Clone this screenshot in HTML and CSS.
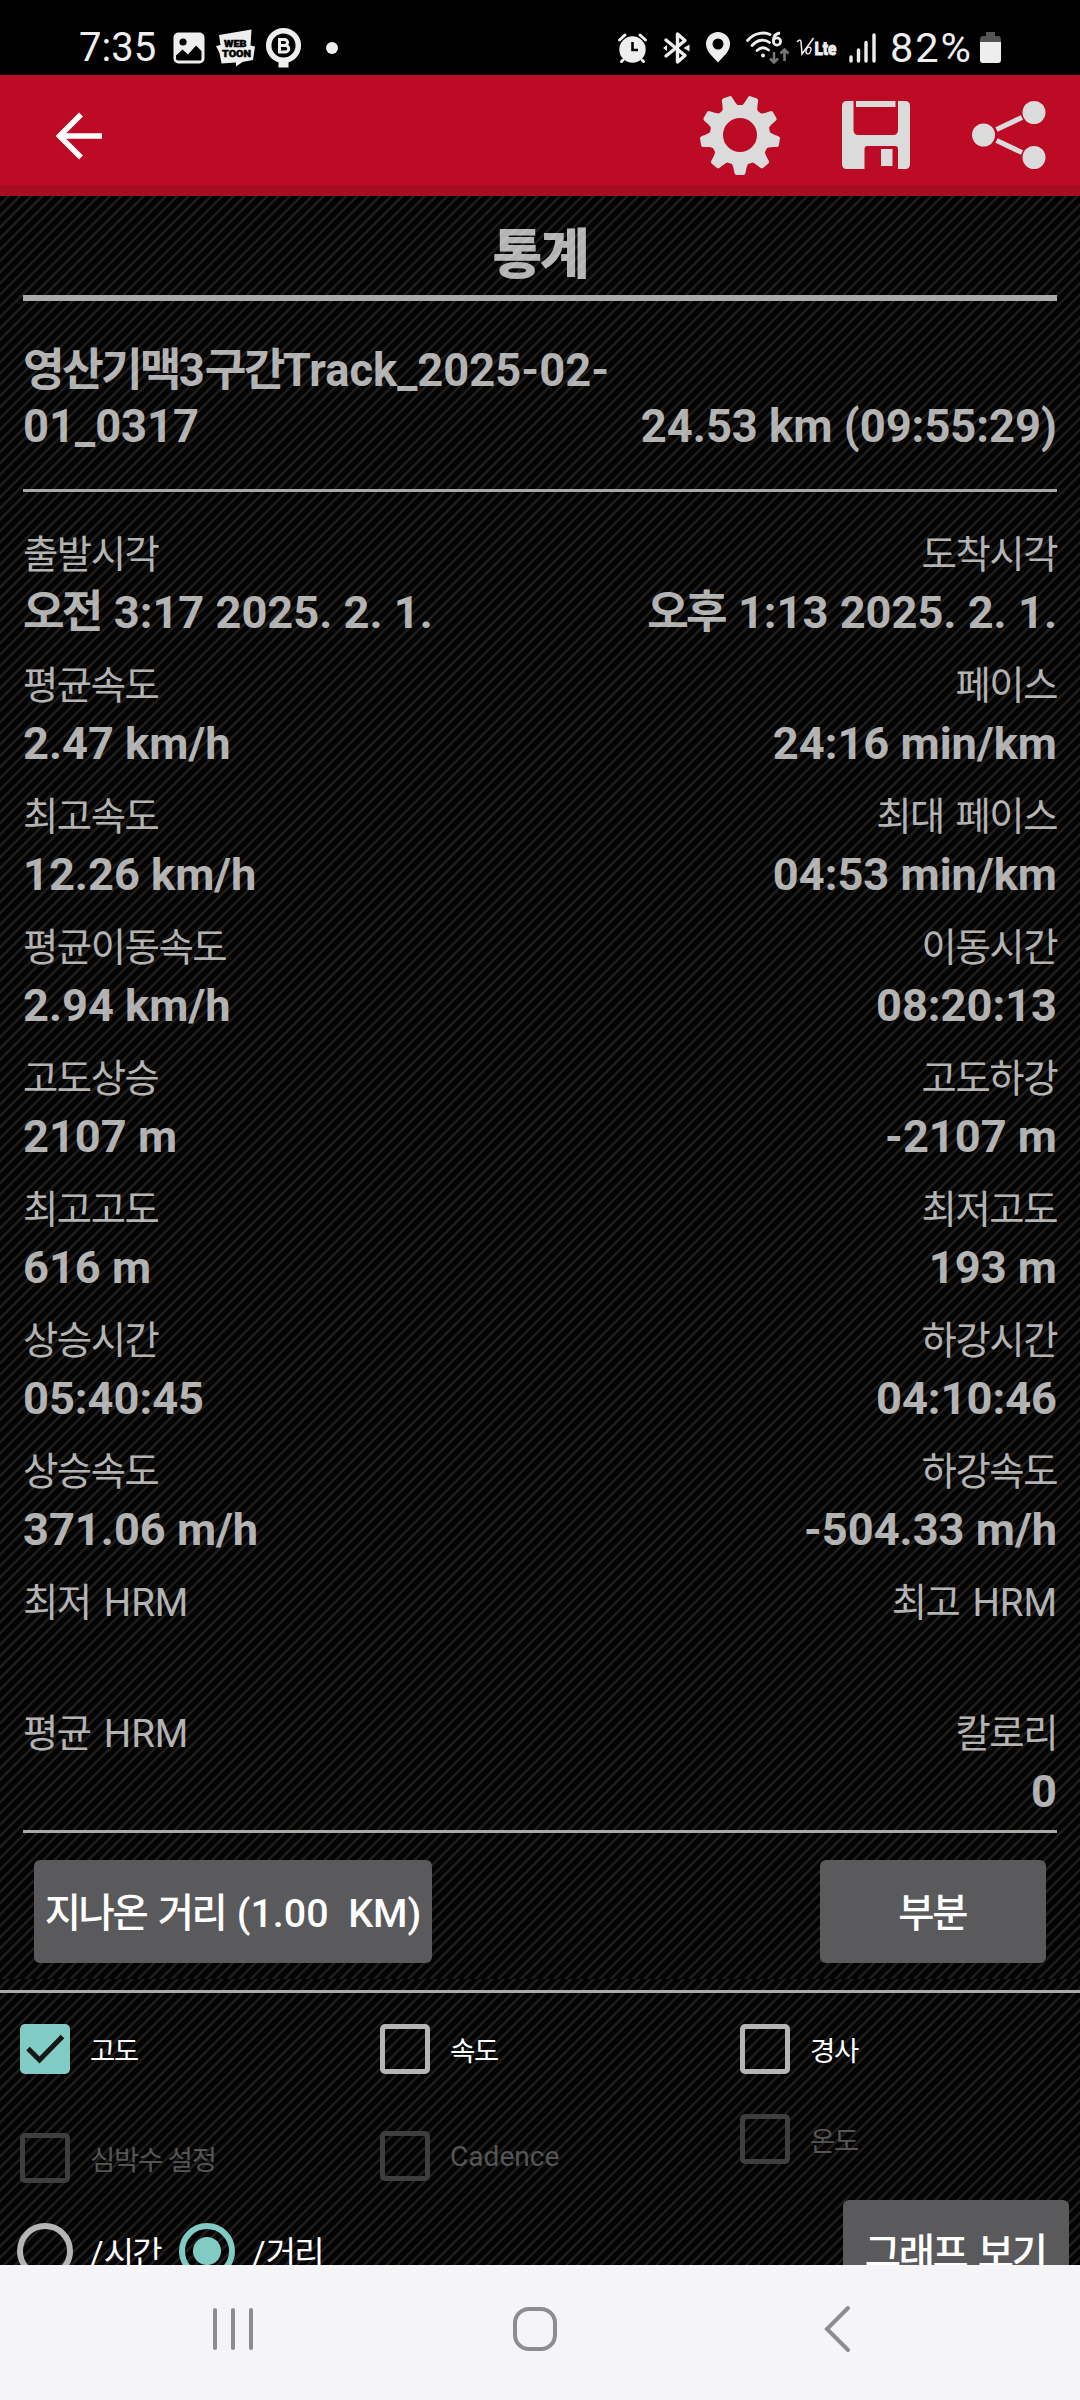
FILE: index.html
```html
<!DOCTYPE html>
<html lang="ko">
<head>
<meta charset="utf-8">
<title>통계</title>
<link rel="stylesheet" href="styles.css">
</head>
<body>
<div class="screen">
  <div class="status">
    <div class="status-side">
      <span class="clock">7:35</span>
      <svg class="ic-photo" width="32" height="32" viewBox="0 0 32 32"><rect x=".5" y=".5" width="31" height="31" rx="5" fill="#eee"/><circle cx="10" cy="10" r="3.6" fill="#000"/><path d="M3 23.5 9.500 17.500 15 22.500 23 13.500 28.500 19V27Q28.500 28.500 27 28.500H5Q3 28.500 3 26.500Z" fill="#000"/></svg>
      <svg class="ic-toon" width="40" height="38" viewBox="0 0 40 38"><path d="M3 6 35.500 0.500 34.500 16.500 39 17.500 37 31 26.500 33 20 37.500V33.500L5.500 34.500 3.500 24 0 17 4.500 16Z" fill="#eee"/><text x="8" y="18" class="toon" textLength="22.500" lengthAdjust="spacingAndGlyphs">WEB</text><text x="6" y="27.500" class="toon" textLength="29" lengthAdjust="spacingAndGlyphs">TOON</text></svg>
      <svg class="ic-b" width="36" height="40" viewBox="0 0 36 40"><rect x="12.500" y="32" width="10" height="7.500" fill="#eee"/><circle cx="17.500" cy="17.500" r="14.800" fill="none" stroke="#eee" stroke-width="5.500"/><path d="M13.500 11.500H18.500A3 3 0 0 1 18.500 17.500H13.500ZM13.500 17.500H19.500A3.200 3.200 0 0 1 19.500 24H13.500Z" fill="none" stroke="#eee" stroke-width="3"/></svg>
      <svg class="ic-dot" width="12" height="12" viewBox="0 0 12 12"><circle cx="6" cy="6" r="6" fill="#eee"/></svg>
    </div>
    <div class="status-side">
      <svg width="30" height="30" viewBox="0 0 30 30"><circle cx="14.500" cy="16.500" r="13.200" fill="#eee"/><path d="M1.500 7 7 2M22 2 27.500 7M5 27 3.500 28.500M24 27 25.500 28.500" stroke="#eee" stroke-width="3" stroke-linecap="round"/><path d="M14.500 9V17H20" fill="none" stroke="#000" stroke-width="2.600"/></svg>
      <svg class="ic-bt" width="28" height="32" viewBox="0 0 28 32"><path d="M3 8 22 23.500 14.500 30V2L22 8.500 3 24" fill="none" stroke="#eee" stroke-width="3.400" stroke-linecap="round" stroke-linejoin="round"/><path d="M0 16 4 13V19ZM20.500 16 26.500 12.500V19.500Z" fill="#eee"/></svg>
      <svg class="ic-pin" width="24" height="31" viewBox="0 0 24 31"><path fill-rule="evenodd" d="M12 0A12 12 0 0 1 24 12C24 20 16.500 25 12 30.500 7.500 25 0 20 0 12A12 12 0 0 1 12 0ZM12 6.500A5.500 5.500 0 1 0 12 17.500 5.500 5.500 0 1 0 12 6.500Z" fill="#eee"/></svg>
      <svg class="ic-wifi" width="44" height="34" viewBox="0 0 44 34"><g fill="none" stroke="#eee" stroke-width="2.800" stroke-linecap="round"><path d="M1.500 9.500C9 1 19 1 24 3.500M6 14.500C12 8 19 8 23.500 11.500M11 19.500C15 16 19 16 22.500 19"/></g><circle cx="17" cy="24.500" r="2" fill="#eee"/><path d="M34 2Q27 3 27.500 10" fill="none" stroke="#eee" stroke-width="2.800"/><circle cx="31" cy="10.500" r="3.600" fill="none" stroke="#eee" stroke-width="2.800"/><path d="M28 21V31M24 27.500 28 31.500 32 27.500M38.500 30V19M34.500 22.500 38.500 18.500 42.500 22.500" fill="none" stroke="#777" stroke-width="2.600"/></svg>
      <svg class="ic-volte" width="42" height="22" viewBox="0 0 42 22"><path d="M1 5Q4 1.500 5 4.500L6 17Q12 9 17.500 1" fill="none" stroke="#eee" stroke-width="1.500"/><ellipse cx="12.500" cy="13.500" rx="2.300" ry="3.500" transform="rotate(20 12.500 13.500)" fill="none" stroke="#eee" stroke-width="1.300"/><text x="18.500" y="18" class="lte" textLength="22" lengthAdjust="spacingAndGlyphs">Lte</text></svg>
      <svg class="ic-sig" width="28" height="30" viewBox="0 0 28 30"><path d="M2 24V28M9.500 17V28M17 9.500V28M25 2V28" stroke="#eee" stroke-width="3.400" stroke-linecap="round"/></svg>
      <span class="pct">82%</span>
      <svg class="ic-bat" width="21" height="32" viewBox="0 0 21 32"><path d="M6 0H15V4H18Q21 4 21 8V11H0V8Q0 4 3 4H6Z" fill="#555"/><path d="M0 10H21V28Q21 31 18 31H3Q0 31 0 28Z" fill="#eee"/></svg>
    </div>
  </div>

  <header class="bar">
    <svg width="48" height="48" viewBox="0 0 48 48"><path d="M46 24H6M25 2.500 3.500 24 25 45.500" fill="none" stroke="#fff" stroke-width="5.500"/></svg>
    <div class="actions">
      <svg width="80" height="80" viewBox="-40 -40 80 80" fill="#dbdbdb">
        <defs><path id="tooth" d="M-10.500 26C-7 29-6.500 33-5.500 38Q-5 40-3.500 40H3.500Q5 40 5.500 38C6.500 33 7 29 10.500 26Z"/></defs>
        <circle r="23.500" fill="none" stroke="#dbdbdb" stroke-width="13"/>
        <use href="#tooth"/><use href="#tooth" transform="rotate(40)"/><use href="#tooth" transform="rotate(80)"/><use href="#tooth" transform="rotate(120)"/><use href="#tooth" transform="rotate(160)"/><use href="#tooth" transform="rotate(200)"/><use href="#tooth" transform="rotate(240)"/><use href="#tooth" transform="rotate(280)"/><use href="#tooth" transform="rotate(320)"/>
      </svg>
      <svg class="ic-save" width="68" height="68" viewBox="0 0 68 68" fill="#dbdbdb"><path d="M5 0H11.500V29Q11.500 34 16.500 34H51Q56 34 56 29V0H63Q68 0 68 5V63Q68 68 63 68H56V48Q56 45 53 45H25.500Q22.500 45 22.500 48V68H5Q0 68 0 63V5Q0 0 5 0Z"/><path d="M14 0H53.500V6H14ZM39 48H50.500V65H39Z"/></svg>
      <svg class="ic-share" width="74" height="70" viewBox="0 0 74 70"><g fill="#dbdbdb"><circle cx="11.500" cy="35" r="11.500"/><circle cx="62" cy="12.500" r="11.500"/><circle cx="62" cy="57.500" r="11.500"/></g><path d="M24.500 29.500 50 17.500M24.500 40.500 50 52.500" stroke="#dbdbdb" stroke-width="5"/></svg>
    </div>
  </header>

  <main class="stats">
    <h1>통계</h1>
    <div class="track"><div><span class="ko">영산기맥</span>3<span class="ko">구간</span>Track_2025-02-<br>01_0317</div><div>24.53 km (09:55:29)</div></div>
    <div class="rows">
      <div class="row"><div><p>출발시각</p><b><span class="ko">오전</span> 3:17 2025. 2. 1.</b></div><div><p>도착시각</p><b><span class="ko">오후</span> 1:13 2025. 2. 1.</b></div></div>
      <div class="row"><div><p>평균속도</p><b>2.47 km/h</b></div><div><p>페이스</p><b>24:16 min/km</b></div></div>
      <div class="row"><div><p>최고속도</p><b>12.26 km/h</b></div><div><p>최대 페이스</p><b>04:53 min/km</b></div></div>
      <div class="row"><div><p>평균이동속도</p><b>2.94 km/h</b></div><div><p>이동시간</p><b>08:20:13</b></div></div>
      <div class="row"><div><p>고도상승</p><b>2107 m</b></div><div><p>고도하강</p><b>-2107 m</b></div></div>
      <div class="row"><div><p>최고고도</p><b>616 m</b></div><div><p>최저고도</p><b>193 m</b></div></div>
      <div class="row"><div><p>상승시간</p><b>05:40:45</b></div><div><p>하강시간</p><b>04:10:46</b></div></div>
      <div class="row"><div><p>상승속도</p><b>371.06 m/h</b></div><div><p>하강속도</p><b>-504.33 m/h</b></div></div>
      <div class="row"><div><p>최저<span class="en"> HRM</span></p></div><div><p>최고<span class="en"> HRM</span></p></div></div>
      <div class="row"><div><p>평균<span class="en"> HRM</span></p></div><div><p>칼로리</p><b>0</b></div></div>
    </div>
    <div class="buttons">
      <button class="btn btn-dist"><span class="ko">지나온</span> <span class="ko">거리</span> (1.00&nbsp; KM)</button>
      <button class="btn btn-side"><span class="ko">부분</span></button>
    </div>
  </main>

  <section class="graph">
    <div class="checks">
      <label class="check"><svg width="50" height="50" viewBox="0 0 50 50"><rect width="50" height="50" rx="5" fill="#80cbc4"/><path d="M8 24.500 19.500 36 42.500 12.500" fill="none" stroke="#161616" stroke-width="5"/></svg>고도</label>
      <label class="check"><i class="box"></i>속도</label>
      <label class="check"><i class="box"></i>경사</label>
    </div>
    <div class="checks second">
      <label class="check off low"><i class="box"></i>심박수 설정</label>
      <label class="check off mid"><i class="box"></i><span class="en">Cadence</span></label>
      <label class="check off"><i class="box"></i>온도</label>
    </div>
    <div class="axis">
      <label class="radio"><i class="ring"></i><span><span class="en">/</span>시간</span></label>
      <label class="radio"><i class="ring on"></i><span><span class="en">/</span>거리</span></label>
      <button class="btn btn-side btn-graph"><span class="ko">그래프</span> <span class="ko">보기</span></button>
    </div>
  </section>

  <nav class="nav">
    <svg width="42" height="46" viewBox="0 0 42 46"><path d="M3 4V42M21 4V42M39 4V42" stroke="#8d8d8f" stroke-width="4" stroke-linecap="round"/></svg>
    <svg class="ic-home" width="46" height="46" viewBox="0 0 46 46"><rect x="3" y="3" width="40" height="40" rx="14" fill="none" stroke="#8d8d8f" stroke-width="4"/></svg>
    <svg class="ic-back" width="28" height="46" viewBox="0 0 28 46"><path d="M25 2 4 23 25 44" fill="none" stroke="#8d8d8f" stroke-width="4" stroke-linecap="round"/></svg>
  </nav>
</div>
</body>
</html>
```
FILE: styles.css
```css
* { box-sizing: border-box; margin: 0; padding: 0; }
body { background: #000; }
svg { display: block; flex: none; overflow: visible; }
.screen {
  width: 1080px; height: 2400px; overflow: hidden;
  display: flex; flex-direction: column;
  font-family: Roboto, "Noto Sans CJK KR", sans-serif;
  color: #fff;
}

.status { height: 75px; flex: none; display: flex; justify-content: space-between; padding: 0 79px; background: #000; color: #eee; }
.status-side { display: flex; align-items: center; padding-top: 20px; }
.clock, .pct { font-size: 40px; line-height: 50px; font-weight: 400; }
.clock { width: 94px; }
.ic-toon { margin-left: 11px; }
.toon { font: 900 9.500px Roboto, sans-serif; fill: #000; stroke: #000; stroke-width: .5px; }
.lte { font: 900 19px Roboto, sans-serif; fill: #eee; stroke: #eee; stroke-width: .8px; }
.ic-b { margin-left: 10px; }
.ic-dot { margin-left: 24px; }
.ic-bt { margin-left: 15px; }
.ic-pin { margin-left: 15px; }
.ic-wifi { margin-left: 16px; }
.ic-volte { margin-left: 6px; }
.ic-sig { margin-left: 11px; }
.pct { margin-left: 13px; width: 86px; font-size: 41.500px; letter-spacing: 1.900px; }
.ic-bat { margin-left: 4px; }

.bar {
  height: 121px; flex: none; display: flex; align-items: center; justify-content: space-between;
  padding: 0 34px 0 56px; background: #bd0a25; border-bottom: 11px solid #a50f20;
}
.bar > svg { margin-top: 11px; }
.actions { display: flex; align-items: center; margin-top: 10px; }
.ic-save { margin-left: 62px; }
.ic-share { margin-left: 62px; }

.stats, .graph {
  background: repeating-linear-gradient(135deg, #040303 0, #040303 4.200px, #211f1e 5.700px, #211f1e 6.700px, #040303 7.955px);
}
.stats { height: 1783px; flex: none; padding: 0 23px; color: rgba(255, 255, 255, .7); }
h1 { height: 105px; padding-top: 27px; font-size: 54px; line-height: 66px; font-weight: 900; text-align: center; letter-spacing: -.04em; border-bottom: 6px solid #a9a8aa; }
.ko { letter-spacing: -.06em; margin-right: .04em; }
.track .ko { margin-right: 0; }
.en { letter-spacing: 0; }

.track {
  height: 191px; display: flex; justify-content: space-between; align-items: flex-end;
  padding-bottom: 35px; border-bottom: 3px solid #a9a6a6;
  font-size: 45.300px; line-height: 55.500px; font-weight: 700; white-space: nowrap;
}
.rows { height: 1341px; padding-top: 33px; border-bottom: 3px solid #a9a8a4; }
.row { height: 131px; display: flex; justify-content: space-between; white-space: nowrap; }
.row > div:last-child { text-align: right; }
.row p { font-size: 38.400px; line-height: 60px; letter-spacing: -.038em; word-spacing: 3.500px; }
.row b { display: block; font-size: 45.200px; line-height: 55px; }

.buttons { display: flex; justify-content: space-between; padding: 27px 11px 0; }
.btn { height: 103px; padding-top: 4px; border: 0; border-radius: 6px; background: #5a5a5c; color: #fff; font: 500 39.400px/99px Roboto, "Noto Sans CJK KR", sans-serif; white-space: nowrap; }
.btn-dist { width: 398px; }
.btn-side { width: 226px; }

.graph { height: 286px; flex: none; overflow: hidden; padding-top: 11px; }
.checks { display: grid; grid-template-columns: repeat(3, 360px); height: 124px; padding-top: 31px; border-top: 3px solid #a9aaa9; }
.second { height: 86px; padding-top: 0; border: 0; }
.check { height: 50px; display: flex; align-items: center; gap: 20px; padding-left: 20px; font-size: 27.500px; letter-spacing: -.045em; }
.check .en { font-size: 28.100px; }
.box { width: 50px; height: 50px; border: 5px solid #b5b5b5; border-radius: 5px; }
.off { color: #555; }
.off .box { border-color: #3e3e3e; }
.low { margin-top: 19px; }
.mid { margin-top: 17px; }
.axis { display: flex; align-items: flex-start; padding: 0 11px 0 17px; }
.radio { width: 162px; height: 101px; display: flex; align-items: center; gap: 17px; font-size: 33px; letter-spacing: -.05em; white-space: nowrap; }
.ring { width: 56px; height: 56px; flex: none; border: 6px solid #b5b5b5; border-radius: 50%; }
.ring.on { border-color: #80cbc4; background: radial-gradient(circle, #80cbc4 13.500px, transparent 14.500px); }
.btn-graph { margin-left: auto; }

.nav { height: 135px; flex: none; display: flex; align-items: center; padding: 0 0 7px 212px; background: #f5f5f8; }
.ic-home { margin-left: 258px; }
.ic-back { margin-left: 265px; }
```
